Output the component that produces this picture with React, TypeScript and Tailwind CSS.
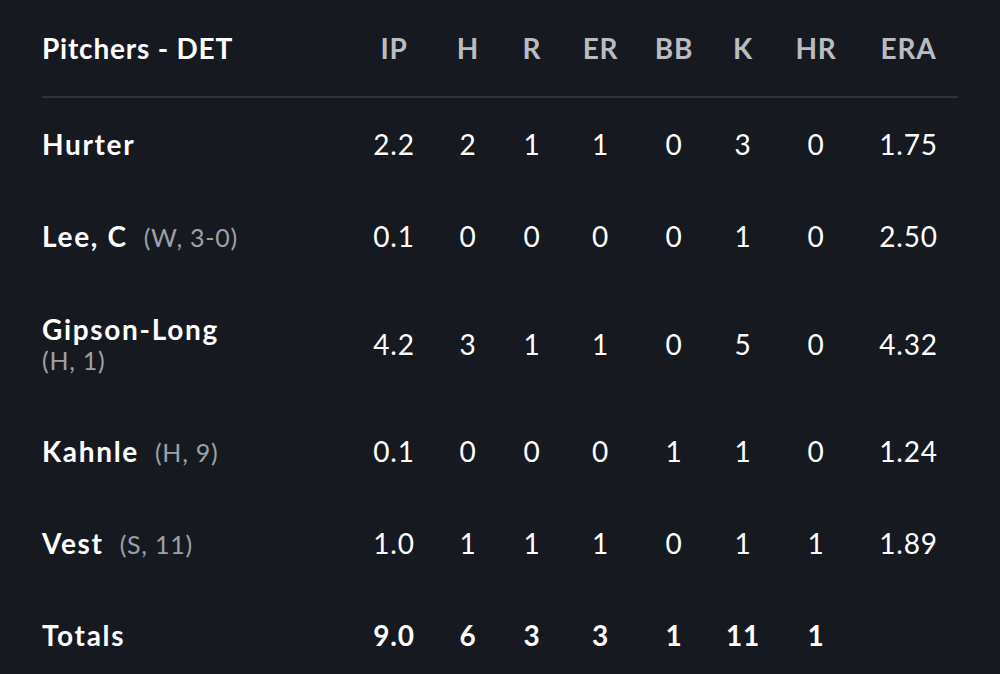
const COLS = ['IP', 'H', 'R', 'ER', 'BB', 'K', 'HR', 'ERA']

interface Pitcher {
  name: string
  note?: string
  wrap?: boolean
  stats: string[]
}

const PITCHERS: Pitcher[] = [
  { name: 'Hurter', stats: ['2.2', '2', '1', '1', '0', '3', '0', '1.75'] },
  { name: 'Lee, C', note: '(W, 3-0)', stats: ['0.1', '0', '0', '0', '0', '1', '0', '2.50'] },
  { name: 'Gipson-Long', note: '(H, 1)', wrap: true, stats: ['4.2', '3', '1', '1', '0', '5', '0', '4.32'] },
  { name: 'Kahnle', note: '(H, 9)', stats: ['0.1', '0', '0', '0', '1', '1', '0', '1.24'] },
  { name: 'Vest', note: '(S, 11)', stats: ['1.0', '1', '1', '1', '0', '1', '1', '1.89'] },
]

const TOTALS = ['9.0', '6', '3', '3', '1', '11', '1', '']

// stat columns are centred under their headers; the ERA cell is nudged right
const GRID = 'grid grid-cols-[316px_72px_76px_52px_85px_62px_76px_70px_107px] items-center'
const CELL = 'text-center text-[28px] leading-8 last:pl-2'

export default function App() {
  return (
    <div className="min-h-[674px] w-[1000px] bg-[#161a20] px-[42px] font-['Lato','Liberation_Sans',sans-serif] tracking-[0.05em] text-white">
      <div className={`${GRID} h-[98px] border-b-2 border-[#2e333b]`}>
        <div className="text-[28px] font-bold leading-8">Pitchers - DET</div>
        {COLS.map((c) => (
          <div key={c} className={`${CELL} font-bold text-[#b9bcc1]`}>
            {c}
          </div>
        ))}
      </div>

      {PITCHERS.map((p) => (
        <div key={p.name} className={`${GRID} ${p.wrap ? 'h-[123px]' : 'h-[92px]'}`}>
          <div className={p.wrap ? 'flex flex-col' : 'flex items-baseline gap-[16px]'}>
            <span className="text-[28px] font-bold leading-[30px] tracking-[0.06em]">{p.name}</span>
            {p.note && (
              <span
                className={`text-[25px] leading-[28px] tracking-[0.03em] text-[#9da1a7] ${p.wrap ? 'mt-[2px]' : ''}`}
              >
                {p.note}
              </span>
            )}
          </div>
          {p.stats.map((s, i) => (
            <div key={i} className={CELL}>
              {s}
            </div>
          ))}
        </div>
      ))}

      <div className={`${GRID} h-[92px]`}>
        <div className="text-[28px] font-bold leading-8 tracking-[0.06em]">Totals</div>
        {TOTALS.map((s, i) => (
          <div key={i} className={`${CELL} font-bold`}>
            {s}
          </div>
        ))}
      </div>
    </div>
  )
}
